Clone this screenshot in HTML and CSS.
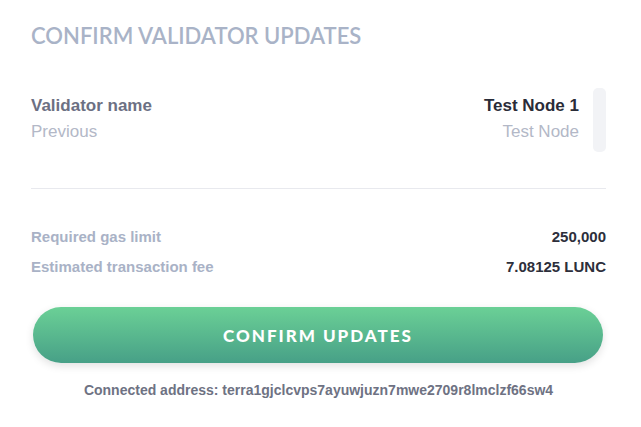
FILE: index.html
```html
<!DOCTYPE html>
<html>
<head>
<meta charset="utf-8">
<link rel="stylesheet" href="styles.css">
</head>
<body>
<main class="modal">
  <h1 class="title">CONFIRM VALIDATOR UPDATES</h1>
  <section class="changes">
    <div class="change-list">
      <div class="change">
        <div class="labels">
          <div class="field">Validator name</div>
          <div class="prev-label">Previous</div>
        </div>
        <div class="values">
          <div class="new-value">Test Node 1</div>
          <div class="old-value">Test Node</div>
        </div>
      </div>
    </div>
    <div class="scrollbar"><div class="thumb"></div></div>
  </section>
  <hr class="divider">
  <section class="fees">
    <div class="fee-row"><span class="fee-label">Required gas limit</span><span class="fee-value">250,000</span></div>
    <div class="fee-row"><span class="fee-label">Estimated transaction fee</span><span class="fee-value">7.08125 LUNC</span></div>
  </section>
  <button class="confirm">CONFIRM UPDATES</button>
  <p class="address">Connected address: terra1gjclcvps7ayuwjuzn7mwe2709r8lmclzf66sw4</p>
</main>
</body>
</html>
```

FILE: styles.css
```css
html, body {
  margin: 0;
  padding: 0;
  background: #ffffff;
}
.modal {
  padding: 22px 35px 0 31px;
  font-family: "Liberation Sans", Arial, sans-serif;
}
.title {
  margin: 0;
  font-family: Lato, "Open Sans", sans-serif;
  font-size: 22px;
  font-weight: 600;
  line-height: 28px;
  color: #a9b3c7;
  letter-spacing: 0;
}
.changes {
  display: flex;
  margin-top: 38px;
  height: 64px;
}
.change-list {
  flex: 1;
  padding-top: 8px;
}
.change {
  display: flex;
  justify-content: space-between;
}
.labels, .values {
  display: flex;
  flex-direction: column;
  gap: 6px;
  font-size: 17px;
  line-height: 20px;
}
.values { text-align: right; }
.field { font-weight: 700; color: #6c7083; }
.prev-label { color: #b3b8c7; }
.new-value { font-weight: 700; color: #2a2c38; }
.old-value { color: #b3b8c7; }
.scrollbar {
  width: 13px;
  margin-left: 14px;
}
.thumb {
  height: 64px;
  background: #f2f3f6;
  border-radius: 5px;
}
.divider {
  margin: 36px 0 0 0;
  border: 0;
  border-top: 1px solid #e8e9ee;
}
.fees {
  margin-top: 39px;
  display: flex;
  flex-direction: column;
  gap: 12px;
}
.fee-row {
  display: flex;
  justify-content: space-between;
  font-size: 15px;
  line-height: 18px;
  font-weight: 700;
}
.fee-label { color: #a9b2c6; }
.fee-value { color: #2d2f3b; }
.confirm {
  display: block;
  width: 570px;
  height: 56px;
  margin: 31px 0 0 2px;
  border: 0;
  border-radius: 28px;
  background: linear-gradient(180deg, #6bd096 0%, #47a087 100%);
  box-shadow: 0 3px 8px rgba(0, 0, 0, 0.12);
  color: #ffffff;
  font-family: Lato, "Open Sans", sans-serif;
  font-size: 17px;
  font-weight: 900;
  letter-spacing: 2px;
}
.address {
  margin: 19px 0 0 0;
  line-height: 16px;
  text-align: center;
  font-size: 14px;
  font-weight: 700;
  color: #6e7283;
}
```
